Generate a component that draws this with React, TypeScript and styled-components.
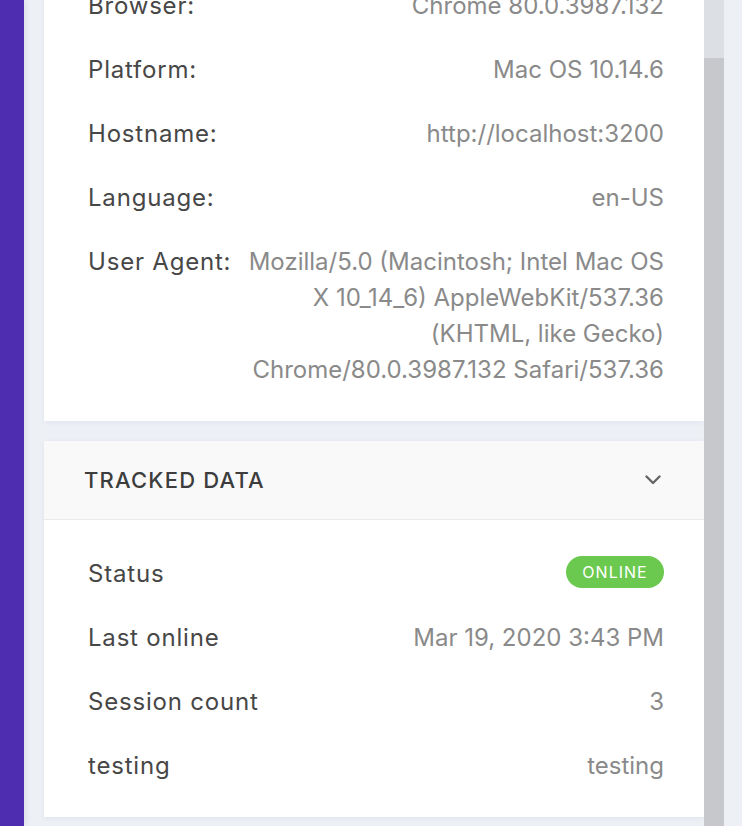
import React from "react";
import styled, { createGlobalStyle } from "styled-components";

const Global = createGlobalStyle`
  html, body { margin: 0; padding: 0; }
  body { font-family: Inter, "Open Sans", "Liberation Sans", sans-serif; background: #edf0f5; }
`;

const Page = styled.div`
  display: flex;
  height: 826px;
  overflow: hidden;
  background: #edf0f5;
`;

const SideBar = styled.div`
  width: 24px;
  flex: none;
  background: #4f2db1;
  box-shadow: 2px 0 6px rgba(30, 40, 70, 0.08);
  z-index: 1;
`;

const Main = styled.div`
  width: 660px;
  flex: none;
  margin-left: 20px;
  margin-top: -46px;
  display: flex;
  flex-direction: column;
  gap: 20px;
`;

const ScrollTrack = styled.div`
  width: 20px;
  flex: none;
  display: flex;
  flex-direction: column;
  background: #dcdfe4;
`;

const ScrollThumb = styled.div`
  margin-top: 58px;
  flex: 1;
  background: #c7c8cc;
`;

const Card = styled.section`
  background: #fff;
  box-shadow: 0 1px 6px rgba(40, 50, 80, 0.06);
`;

const CardBody = styled.div<{ $pt: number; $pb: number }>`
  padding: ${(p) => p.$pt}px 40px ${(p) => p.$pb}px 44px;
  display: flex;
  flex-direction: column;
`;

const CardHeader = styled.div`
  height: 78px;
  background: #f9f9f9;
  border-bottom: 1px solid #ebebeb;
  display: flex;
  align-items: center;
  justify-content: space-between;
  padding: 0 43px 0 40px;
`;

const HeaderTitle = styled.h3`
  margin: 0;
  font-size: 22px;
  font-weight: 500;
  letter-spacing: 1.2px;
  color: #3d3d3d;
  text-transform: uppercase;
`;

const Row = styled.div`
  display: flex;
  align-items: flex-start;
  justify-content: space-between;
  gap: 10px;
  padding: 14px 0;
  font-size: 24px;
  line-height: 36px;
`;

const Label = styled.div`
  color: #474747;
  white-space: nowrap;
  letter-spacing: 0.8px;
  flex: none;
`;

const Value = styled.div`
  color: #8a8a8a;
  text-align: right;
  flex: 1;
`;

const Badge = styled.span`
  display: inline-flex;
  align-items: center;
  justify-content: center;
  height: 32px;
  width: 98px;
  margin-top: 0;
  vertical-align: top;
  border-radius: 16px;
  background: #6bc94f;
  color: #fff;
  font-size: 16px;
  letter-spacing: 1px;
  font-weight: 400;
`;

const Chevron = () => (
  <svg width="16" height="10" viewBox="0 0 16 10" fill="none">
    <path d="M1.5 1.5 L8 8 L14.5 1.5" stroke="#666" strokeWidth="2.4" strokeLinecap="round" strokeLinejoin="round" />
  </svg>
);

const systemInfo = [
  ["Browser:", "Chrome 80.0.3987.132"],
  ["Platform:", "Mac OS 10.14.6"],
  ["Hostname:", "http://localhost:3200"],
  ["Language:", "en-US"],
  [
    "User Agent:",
    "Mozilla/5.0 (Macintosh; Intel Mac OS X 10_14_6) AppleWebKit/537.36 (KHTML, like Gecko) Chrome/80.0.3987.132 Safari/537.36",
  ],
];

const tracked: [string, React.ReactNode][] = [
  ["Status", <Badge>ONLINE</Badge>],
  ["Last online", "Mar 19, 2020 3:43 PM"],
  ["Session count", "3"],
  ["testing", "testing"],
];

export default function App() {
  return (
    <>
      <Global />
      <Page>
        <SideBar />
        <Main>
          <Card>
            <CardBody $pt={20} $pb={19}>
              {systemInfo.map(([k, v]) => (
                <Row key={k}>
                  <Label>{k}</Label>
                  <Value>{v}</Value>
                </Row>
              ))}
            </CardBody>
          </Card>
          <Card>
            <CardHeader>
              <HeaderTitle>Tracked data</HeaderTitle>
              <Chevron />
            </CardHeader>
            <CardBody $pt={22} $pb={19}>
              {tracked.map(([k, v]) => (
                <Row key={k}>
                  <Label>{k}</Label>
                  <Value>{v}</Value>
                </Row>
              ))}
            </CardBody>
          </Card>
        </Main>
        <ScrollTrack>
          <ScrollThumb />
        </ScrollTrack>
      </Page>
    </>
  );
}
